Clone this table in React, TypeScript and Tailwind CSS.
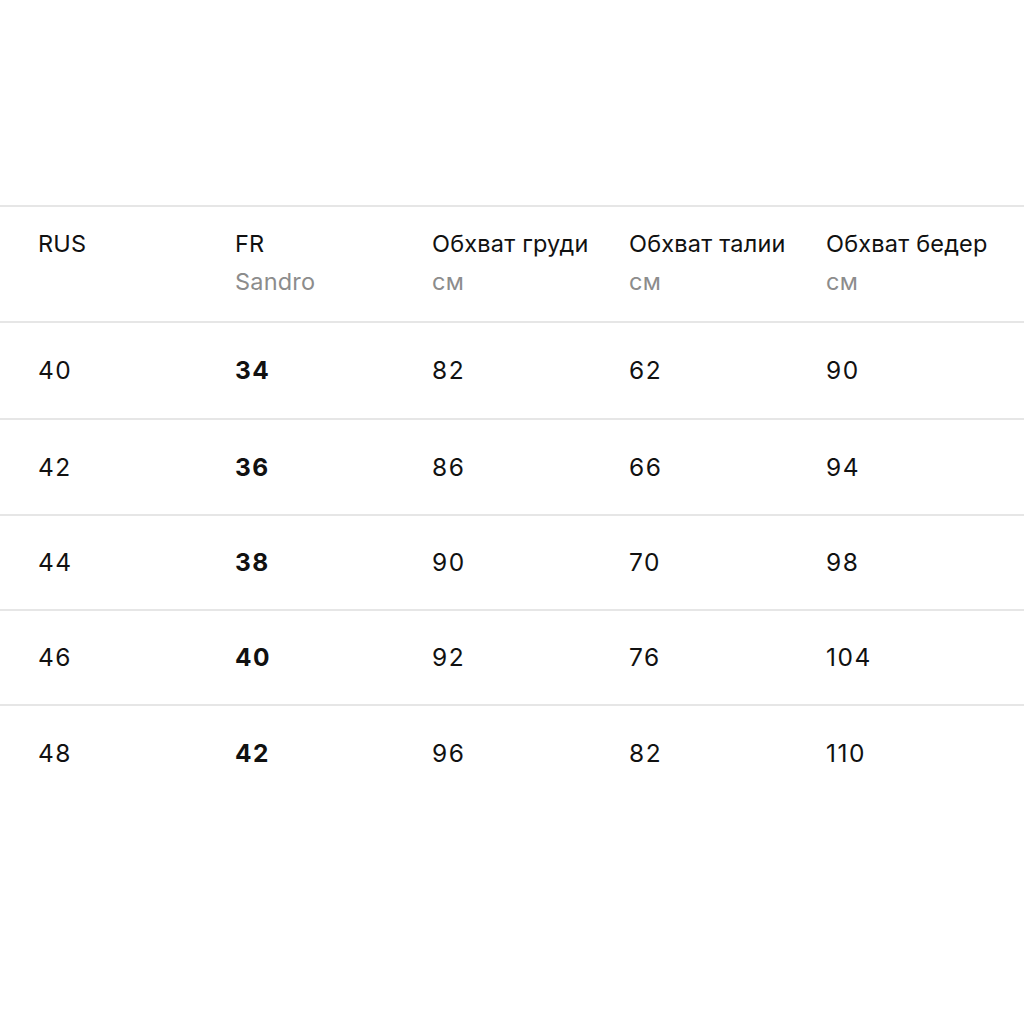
export default function App() {
  const rows = [
    ["40", "34", "82", "62", "90"],
    ["42", "36", "86", "66", "94"],
    ["44", "38", "90", "70", "98"],
    ["46", "40", "92", "76", "104"],
    ["48", "42", "96", "82", "110"],
  ];
  const heights = ["h-[97px]", "h-[96px]", "h-[95px]", "h-[95px]", "h-[95px]"];
  const heads: [string, string | null][] = [
    ["RUS", null],
    ["FR", "Sandro"],
    ["Обхват груди", "см"],
    ["Обхват талии", "см"],
    ["Обхват бедер", "см"],
  ];
  return (
    <div className="w-[1024px] h-[1024px] bg-white text-[#111] font-['Inter',sans-serif] text-[23.5px] pt-[205px]">
      <div className="border-t-2 border-[#e6e6e6]">
        <div className="grid grid-cols-[197px_197px_197px_197px_1fr] pl-[38px] h-[116px] pt-[20px] border-b-2 border-[#e6e6e6]">
          {heads.map(([a, b], i) => (
            <div key={i} className="flex flex-col">
              <span className="leading-[34px] tracking-[0.2px]">{a}</span>
              {b && <span className="leading-[34px] mt-[4px] text-[#8c8c8c] tracking-[0.2px]">{b}</span>}
            </div>
          ))}
        </div>
        {rows.map((r, ri) => (
          <div
            key={ri}
            className={`grid grid-cols-[197px_197px_197px_197px_1fr] pl-[38px] ${heights[ri]} items-center ${ri < rows.length - 1 ? "border-b-2 border-[#e6e6e6]" : ""}`}
          >
            {r.map((c, ci) => (
              <span key={ci} className={`text-[24.5px] tracking-[1.5px] ${ci === 1 ? "font-bold" : ""}`}>{c}</span>
            ))}
          </div>
        ))}
      </div>
    </div>
  );
}
